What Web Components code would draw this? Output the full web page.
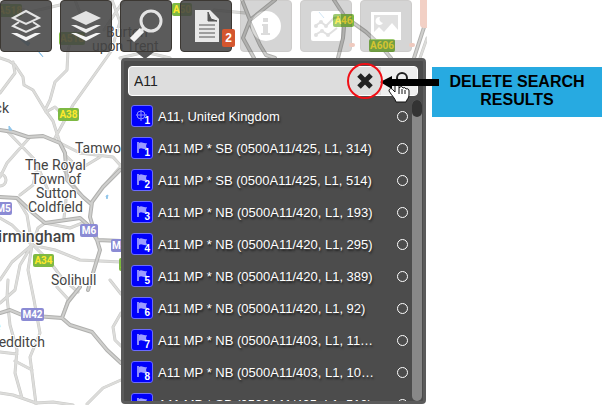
<!DOCTYPE html>
<html lang="en">
<head>
<meta charset="utf-8">
<title>Map search</title>
<style>
  html, body {
    margin: 0;
    height: 100%;
  }
  body {
    background: #fff;
    font-family: "Liberation Sans", Arial, sans-serif;
    overflow: hidden;
  }
</style>
</head>
<body>
<map-page></map-page>

<script>
'use strict';

const ICONS = {
  layers: `<path d="M26 11 39 18 26 24 13 18Z" fill="none" stroke="#e4e4e4" stroke-width="2"/>
    <path d="M19 22 13 26 26 32 39 26 33 22" fill="none" stroke="#e8e8e8" stroke-width="2"/>
    <path d="M11 33h6l9 4 9-4h6L26 41Z" fill="#f4f4f4"/>`,
  stack: `<path d="M26 11 41 18 26 25 11 18Z" fill="#e2e2e2"/>
    <path d="M11 25h5l10 4 10-4h5L26 33Z" fill="#eee"/>
    <path d="M11 33h5l10 4 10-4h5L26 41Z" fill="#f6f6f6"/>`,
  search: `<circle cx="31" cy="21" r="10" fill="none" stroke="#e4e4e4" stroke-width="3"/>
    <path d="M22 30 12 40" stroke="#f4f4f4" stroke-width="6"/>
    <path d="M24 28 21 31" stroke="#e4e4e4" stroke-width="3"/>`,
  report: `<path d="M15 10h15l9 9v23H15Z" fill="#e8e8e8"/>
    <path d="M28 12v9h9l-6-2Z" fill="#555" stroke="#555"/>
    <path d="M19 25h16M19 29h16M19 33h16M19 37h16" stroke="#555" stroke-width="1"/>`,
  info: `<circle cx="26" cy="26" r="15" fill="#fff"/>
    <path d="M23 18h5v4h-5ZM22 24h6v9h2v2h-9v-2h2v-7h-1Z" fill="#777"/>`,
  chart: `<rect x="11" y="11" width="30" height="30" rx="2" fill="#fff"/>
    <path d="M15 26 21 22 26 26 34 18 40 17M15 35 22 31 28 35 37 28" fill="none" stroke="#888" stroke-width="2"/>
    <path d="M19 12 24 18" stroke="#48a0dd"/>
    <g fill="#888"><circle cx="16" cy="26" r="2"/><circle cx="21" cy="22" r="2"/><circle cx="26" cy="26" r="2"/><circle cx="16" cy="35" r="2"/><circle cx="22" cy="31" r="2"/><circle cx="28" cy="35" r="2"/></g>`,
  picture: `<rect x="11" y="12" width="30" height="28" fill="#fff"/>
    <rect x="14" y="15" width="24" height="22" fill="#888"/>
    <path d="M20 17a4 4 0 1 0 3 6a4 4 0 0 1-3-6Z" fill="#fff"/>
    <path d="M14 37v-5l5-5 5 5 8-9 6 7v7Z" fill="#fff"/>`
};

class BaseElement extends HTMLElement {
  constructor() {
    super();
    this.attachShadow({mode: 'open'});
  }
  connectedCallback() {
    this.shadowRoot.innerHTML = this.render();
  }
}

class MapCanvas extends BaseElement {
  shield(x, y, width, text, kind) {
    return `<g class="${kind || 'a'}"><rect x="${x}" y="${y}" width="${width}" height="13" rx="2"/>
      <text x="${x + width / 2}" y="${y + 10}">${text}</text></g>`;
  }
  render() {
    const minor = `M0 58 9 61 15 65 23 77 24 85 33 90 45 110 53 121 60 143M13 62 15 73 0 93
      M68 50 67 70 55 82 50 100 45 110M112 50 73 105 55 138M46 112 55 107 60 112
      M8 132 35 160 48 190M30 137 7 163 0 177M60 143 80 153 113 157 121 166M121 166 103 187
      M64 170 72 183 83 197 91 204M37 168 33 185 20 195M0 186a6 6 0 1 0 0-12M0 218 12 225 32 245
      M32 245 27 215 18 200M32 245 38 228 45 223 70 228 85 222M32 245 12 262 0 280
      M32 245 20 265 15 290 0 303M32 245 28 270 32 290
      M32 245 55 250 80 260 121 262M34 246 50 262 62 278 78 292M80 287 68 300 62 318M57 287 68 299
      M8 280 7 297 10 325 17 350 15 373 22 398M30 280 34 300 40 333 30 357 36 404M15 361 32 370M0 352 17 354
      M0 393 13 395 36 403 53 402 73 405M87 404 103 388 121 380M110 280 121 294
      M121 313 113 327 115 340 121 346M66 200 64 218M65 155 80 169 100 157
      M75 0 82 18 72 38 68 50M112 0 120 22 115 38 112 50M124 0 104 30
      M0 2 30 12 60 5M120 58 145 52 170 58M214 10 245 13M420 58 427 38`;
    const major = `M0 130 13 132 28 137 43 136 60 143 65 153 67 180 83 197 91 204
      M0 197 17 198 33 213 45 223 80 218 88 225 97 240 100 250 93 273 88 290
      M120 170 103 187 92 202 90 217 97 240M97 240 121 241
      M0 313 10 310 22 315 62 318 70 325 92 332 107 350 121 363M80 287 68 302 62 318
      M242 0 250 20 243 38 254 58M275 0 250 20M250 23 260 45 266 55 275 58
      M334 0 345 17 343 38 338 58M352 22 366 32 380 45 391 58M427 18 414 58`;
    return `<style>
        :host {
          display: block;
          position: absolute;
          inset: 0;
        }
        svg {
          display: block;
          width: 100%;
          height: 100%;
          font-family: Roboto, sans-serif;
        }
        text { fill: #444; font-size: 14px; }
        .halo text { paint-order: stroke; stroke: #fff; stroke-width: 2; }
        .halo .city { font-size: 16px; font-weight: 500; }
        .road { fill: none; stroke-linejoin: round; stroke-linecap: round; }
        .a rect { fill: #7eb943; }
        .m rect { fill: #8b8bd4; }
        .a text, .m text {
          font-size: 10px;
          font-weight: 700;
          text-anchor: middle;
          fill: #ffe92b;
        }
        .m text { fill: #fff; }
      </style>
      <svg viewBox="0 0 427 405" preserveAspectRatio="xMinYMin slice" aria-hidden="true">
        <path class="road" d="${minor}" stroke="#c8c8c6" stroke-width="3"/>
        <path class="road" d="${minor}" stroke="#dcdcda" stroke-width="2"/>
        <path class="road" d="${major}" stroke="#b0b0ae" stroke-width="4"/>
        <path class="road" d="${major}" stroke="#cfcfcd" stroke-width="2"/>
        <path d="M37 50 43 57 40 53ZM9 126 12 130H9ZM106 196 108 195 107 199ZM19 38 30 43 28 46Z" fill="#8fc5ea" stroke="#8fc5ea"/>
        <g class="halo">
          <text x="106" y="37">Burton</text>
          <text x="92" y="51">upon Trent</text>
          <text x="-18" y="113">rock</text>
          <text x="75" y="153">Tamworth</text>
          <text x="25" y="170">The Royal</text>
          <text x="31" y="184">Town of</text>
          <text x="36" y="198">Sutton</text>
          <text x="28" y="212">Coldfield</text>
          <text class="city" x="-12" y="242">Birmingham</text>
          <text x="51" y="285">Solihull</text>
          <text x="-7" y="331">e</text>
          <text x="-10" y="347">Redditch</text>
        </g>
        ${this.shield(-2, 4, 24, 'A518')}
        ${this.shield(59, 32, 26, 'A518')}
        ${this.shield(172, 3, 20, 'A50')}
        ${this.shield(333, 14, 21, 'A46')}
        ${this.shield(369, 39, 26, 'A606')}
        ${this.shield(58, 108, 21, 'A38')}
        ${this.shield(33, 254, 21, 'A34')}
        ${this.shield(119, 258, 21, 'A45')}
        ${this.shield(-5, 202, 17, 'M5', 'm')}
        ${this.shield(80, 224, 18, 'M6', 'm')}
        ${this.shield(111, 239, 22, 'M42', 'm')}
        ${this.shield(21, 308, 23, 'M42', 'm')}
      </svg>`;
  }
}
customElements.define('map-canvas', MapCanvas);

class ToolButton extends BaseElement {
  render() {
    const disabled = this.hasAttribute('disabled') ? 'disabled' : '';
    return `<style>
        :host {
          display: block;
          flex: none;
          position: relative;
        }
        button {
          display: block;
          width: 52px;
          height: 52px;
          padding: 0;
          border: 1px solid #3c3833;
          border-radius: 4px;
          background: rgba(68, 68, 68, 0.88);
        }
        button:disabled {
          opacity: 0.25;
        }
        svg {
          display: block;
          margin: -1px;
          width: 52px;
          height: 52px;
        }
        .badge {
          position: absolute;
          right: -3px;
          bottom: 5px;
          padding: 0 3px;
          border-radius: 2px;
          background: #d4562e;
          color: #fff;
          font-size: 12px;
          font-weight: 700;
          line-height: 18px;
        }
        .badge:empty {
          width: 0;
          height: 4px;
          background: #efcabf;
        }
        :host([open])::after {
          content: "";
          position: absolute;
          top: 52px;
          left: 16px;
          border: 9px solid transparent;
          border-top: 7px solid #555;
          border-bottom: 0;
        }
      </style>
      <button type="button" aria-label="${this.getAttribute('label')}" ${disabled}>
        <svg viewBox="0 0 52 52">${ICONS[this.getAttribute('icon')] || ''}</svg>
      </button>
      ${this.hasAttribute('badge') ? `<span class="badge">${this.getAttribute('badge')}</span>` : ''}`;
  }
}
customElements.define('tool-button', ToolButton);

class ToolBar extends BaseElement {
  render() {
    return `<style>
        :host {
          display: flex;
          gap: 8px;
          position: relative;
        }
        .more {
          flex: none;
          width: 52px;
          height: 28px;
          border-radius: 0 0 4px 4px;
          background: #f2d0c5;
        }
      </style>
      <slot></slot>
      <div class="more"></div>`;
  }
}
customElements.define('tool-bar', ToolBar);

class ResultItem extends BaseElement {
  render() {
    const glyph = this.getAttribute('kind') === 'place'
      ? '<circle cx="9" cy="9" r="4"/><path d="M9 4v11M4 9h11"/>'
      : '<path d="M6 4v11" stroke-width="2"/><path d="M7 5c3-2 4 1 8 0l-1 3 1 3c-4 1-5-2-8 0Z" fill="#9c9cff" stroke="none"/>';
    return `<style>
        :host {
          display: block;
        }
        label {
          display: grid;
          grid-template-columns: 22px 1fr auto;
          align-items: center;
          column-gap: 5px;
          height: 32px;
          color: #fff;
          font-size: 13px;
          text-shadow: 1px 2px 2px #222;
        }
        .icon {
          position: relative;
          box-sizing: border-box;
          width: 22px;
          height: 22px;
          border: 1px solid #6b6bff;
          border-radius: 3px;
          background: #0000fa;
        }
        svg {
          display: block;
          width: 20px;
          height: 20px;
          fill: none;
          stroke: #8c8cff;
        }
        .num {
          position: absolute;
          right: 2px;
          bottom: 0;
          font-size: 10px;
          font-weight: 700;
          line-height: 10px;
          text-shadow: none;
        }
        .name {
          white-space: nowrap;
        }
        input {
          appearance: none;
          width: 11px;
          height: 11px;
          margin: 0;
          border: 1px solid #fff;
          border-radius: 50%;
        }
        input:checked {
          background: #fff;
        }
      </style>
      <label>
        <span class="icon"><svg viewBox="0 0 20 20">${glyph}</svg><span class="num">${this.getAttribute('num')}</span></span>
        <span class="name"><slot></slot></span>
        <input type="radio" name="result">
      </label>`;
  }
}
customElements.define('result-item', ResultItem);

class SearchPanel extends BaseElement {
  render() {
    return `<style>
        :host {
          display: flex;
          flex-direction: column;
          flex: 1;
          min-height: 0;
          position: relative;
          margin: 6px 1px 1px 121px;
          box-sizing: border-box;
          border: 3px solid #5b5b5b;
          border-radius: 4px;
          background: #4c4c4c;
        }
        form {
          display: flex;
          flex: none;
          height: 28px;
          margin: 5px 5px 4px 4px;
          border: 1px solid #fff;
          border-radius: 4px;
          background: #ddd;
        }
        input {
          flex: 1;
          min-width: 0;
          padding: 0 5px;
          border: 0;
          outline: 0;
          background: none;
          color: #222;
          font: 14px "Liberation Sans", Arial, sans-serif;
        }
        button {
          position: relative;
          flex: none;
          width: 36px;
          padding: 0;
          border: 0;
          background: none;
        }
        button svg {
          display: block;
          position: relative;
          width: 100%;
          height: 28px;
          overflow: visible;
        }
        .clear {
          z-index: 1;
        }
        .find {
          background: #efefef;
          border-radius: 0 3px 3px 0;
        }
        .results {
          display: flex;
          flex: 1;
          min-height: 0;
        }
        .list {
          flex: 1;
          min-width: 0;
          overflow: hidden;
          padding: 0 4px 0 7px;
        }
        .bar {
          width: 10px;
          margin-right: 1px;
          border-radius: 5px;
          background: #888;
        }
        .thumb {
          height: 17px;
          border-radius: 5px;
          background: #333;
        }
      </style>
      <form>
        <input type="text" value="A11" aria-label="Search">
        <button class="clear" type="button" aria-label="Clear">
          <svg viewBox="0 0 36 28">
            <path d="M14 8 26 20M26 8 14 20" stroke="#222" stroke-width="5"/>
            <circle cx="20" cy="14" r="17" fill="none" stroke="#f00f16" stroke-width="2"/>
          </svg>
        </button>
        <button class="find" type="button" aria-label="Find">
          <svg viewBox="0 0 36 28">
            <circle cx="21" cy="11" r="5" fill="none" stroke="#222" stroke-width="2"/>
          </svg>
        </button>
      </form>
      <div class="results">
        <div class="list"><slot></slot></div>
        <div class="bar"><div class="thumb"></div></div>
      </div>`;
  }
}
customElements.define('search-panel', SearchPanel);

class CallOut extends BaseElement {
  render() {
    return `<style>
        :host {
          display: block;
          position: relative;
          box-sizing: border-box;
          margin: 67px 10px 0 5px;
          padding: 6px 8px 8px;
          background: #27aae1;
          color: #000;
          font-size: 16px;
          font-weight: 700;
          line-height: 18px;
          text-align: center;
        }
        svg {
          position: absolute;
          left: -53px;
          top: -8px;
          width: 62px;
          height: 46px;
        }
      </style>
      <svg viewBox="0 0 62 46" aria-hidden="true">
        <path d="M16 26v-4a2 2 0 0 1 4 0v7l1-1a2 2 0 0 1 3 1 2 2 0 0 1 3 1 2 2 0 0 1 3 2v4c0 3-2 4-3 7H17c-1-4-4-6-7-11 0-3 3-3 4-1l2 2Z" fill="#fff" stroke="#111"/>
        <path d="M20 29v6M23 30v5M26 31v4" stroke="#111"/>
        <path d="M1 23 13 17v3h47v7H13v3Z" fill="#000"/>
      </svg>
      <slot></slot>`;
  }
}
customElements.define('call-out', CallOut);

class MapPage extends BaseElement {
  render() {
    return `<style>
        :host {
          display: grid;
          grid-template-columns: minmax(0, 1fr) 185px;
          height: 100vh;
        }
        main {
          display: flex;
          flex-direction: column;
          position: relative;
          min-height: 0;
          overflow: hidden;
        }
        aside {
          position: relative;
        }
      </style>
      <main>
        <map-canvas></map-canvas>
        <tool-bar>
          <tool-button icon="layers" label="Overlays"></tool-button>
          <tool-button icon="stack" label="Base layers"></tool-button>
          <tool-button icon="search" label="Search" open></tool-button>
          <tool-button icon="report" label="Reports" badge="2"></tool-button>
          <tool-button icon="info" label="Information" disabled></tool-button>
          <tool-button icon="chart" label="Charts" badge="" disabled></tool-button>
          <tool-button icon="picture" label="Pictures" badge="" disabled></tool-button>
        </tool-bar>
        <search-panel>
          <result-item kind="place" num="1">A11, United Kingdom</result-item>
          <result-item num="1">A11 MP * SB (0500A11/425, L1, 314)</result-item>
          <result-item num="2">A11 MP * SB (0500A11/425, L1, 514)</result-item>
          <result-item num="3">A11 MP * NB (0500A11/420, L1, 193)</result-item>
          <result-item num="4">A11 MP * NB (0500A11/420, L1, 295)</result-item>
          <result-item num="5">A11 MP * NB (0500A11/420, L1, 389)</result-item>
          <result-item num="6">A11 MP * NB (0500A11/420, L1, 92)</result-item>
          <result-item num="7">A11 MP * NB (0500A11/403, L1, 11…</result-item>
          <result-item num="8">A11 MP * NB (0500A11/403, L1, 10…</result-item>
          <result-item num="9">A11 MP * SB (0500A11/405, L1, 510)</result-item>
        </search-panel>
      </main>
      <aside>
        <call-out>DELETE SEARCH RESULTS</call-out>
      </aside>`;
  }
}
customElements.define('map-page', MapPage);
</script>
</body>
</html>
